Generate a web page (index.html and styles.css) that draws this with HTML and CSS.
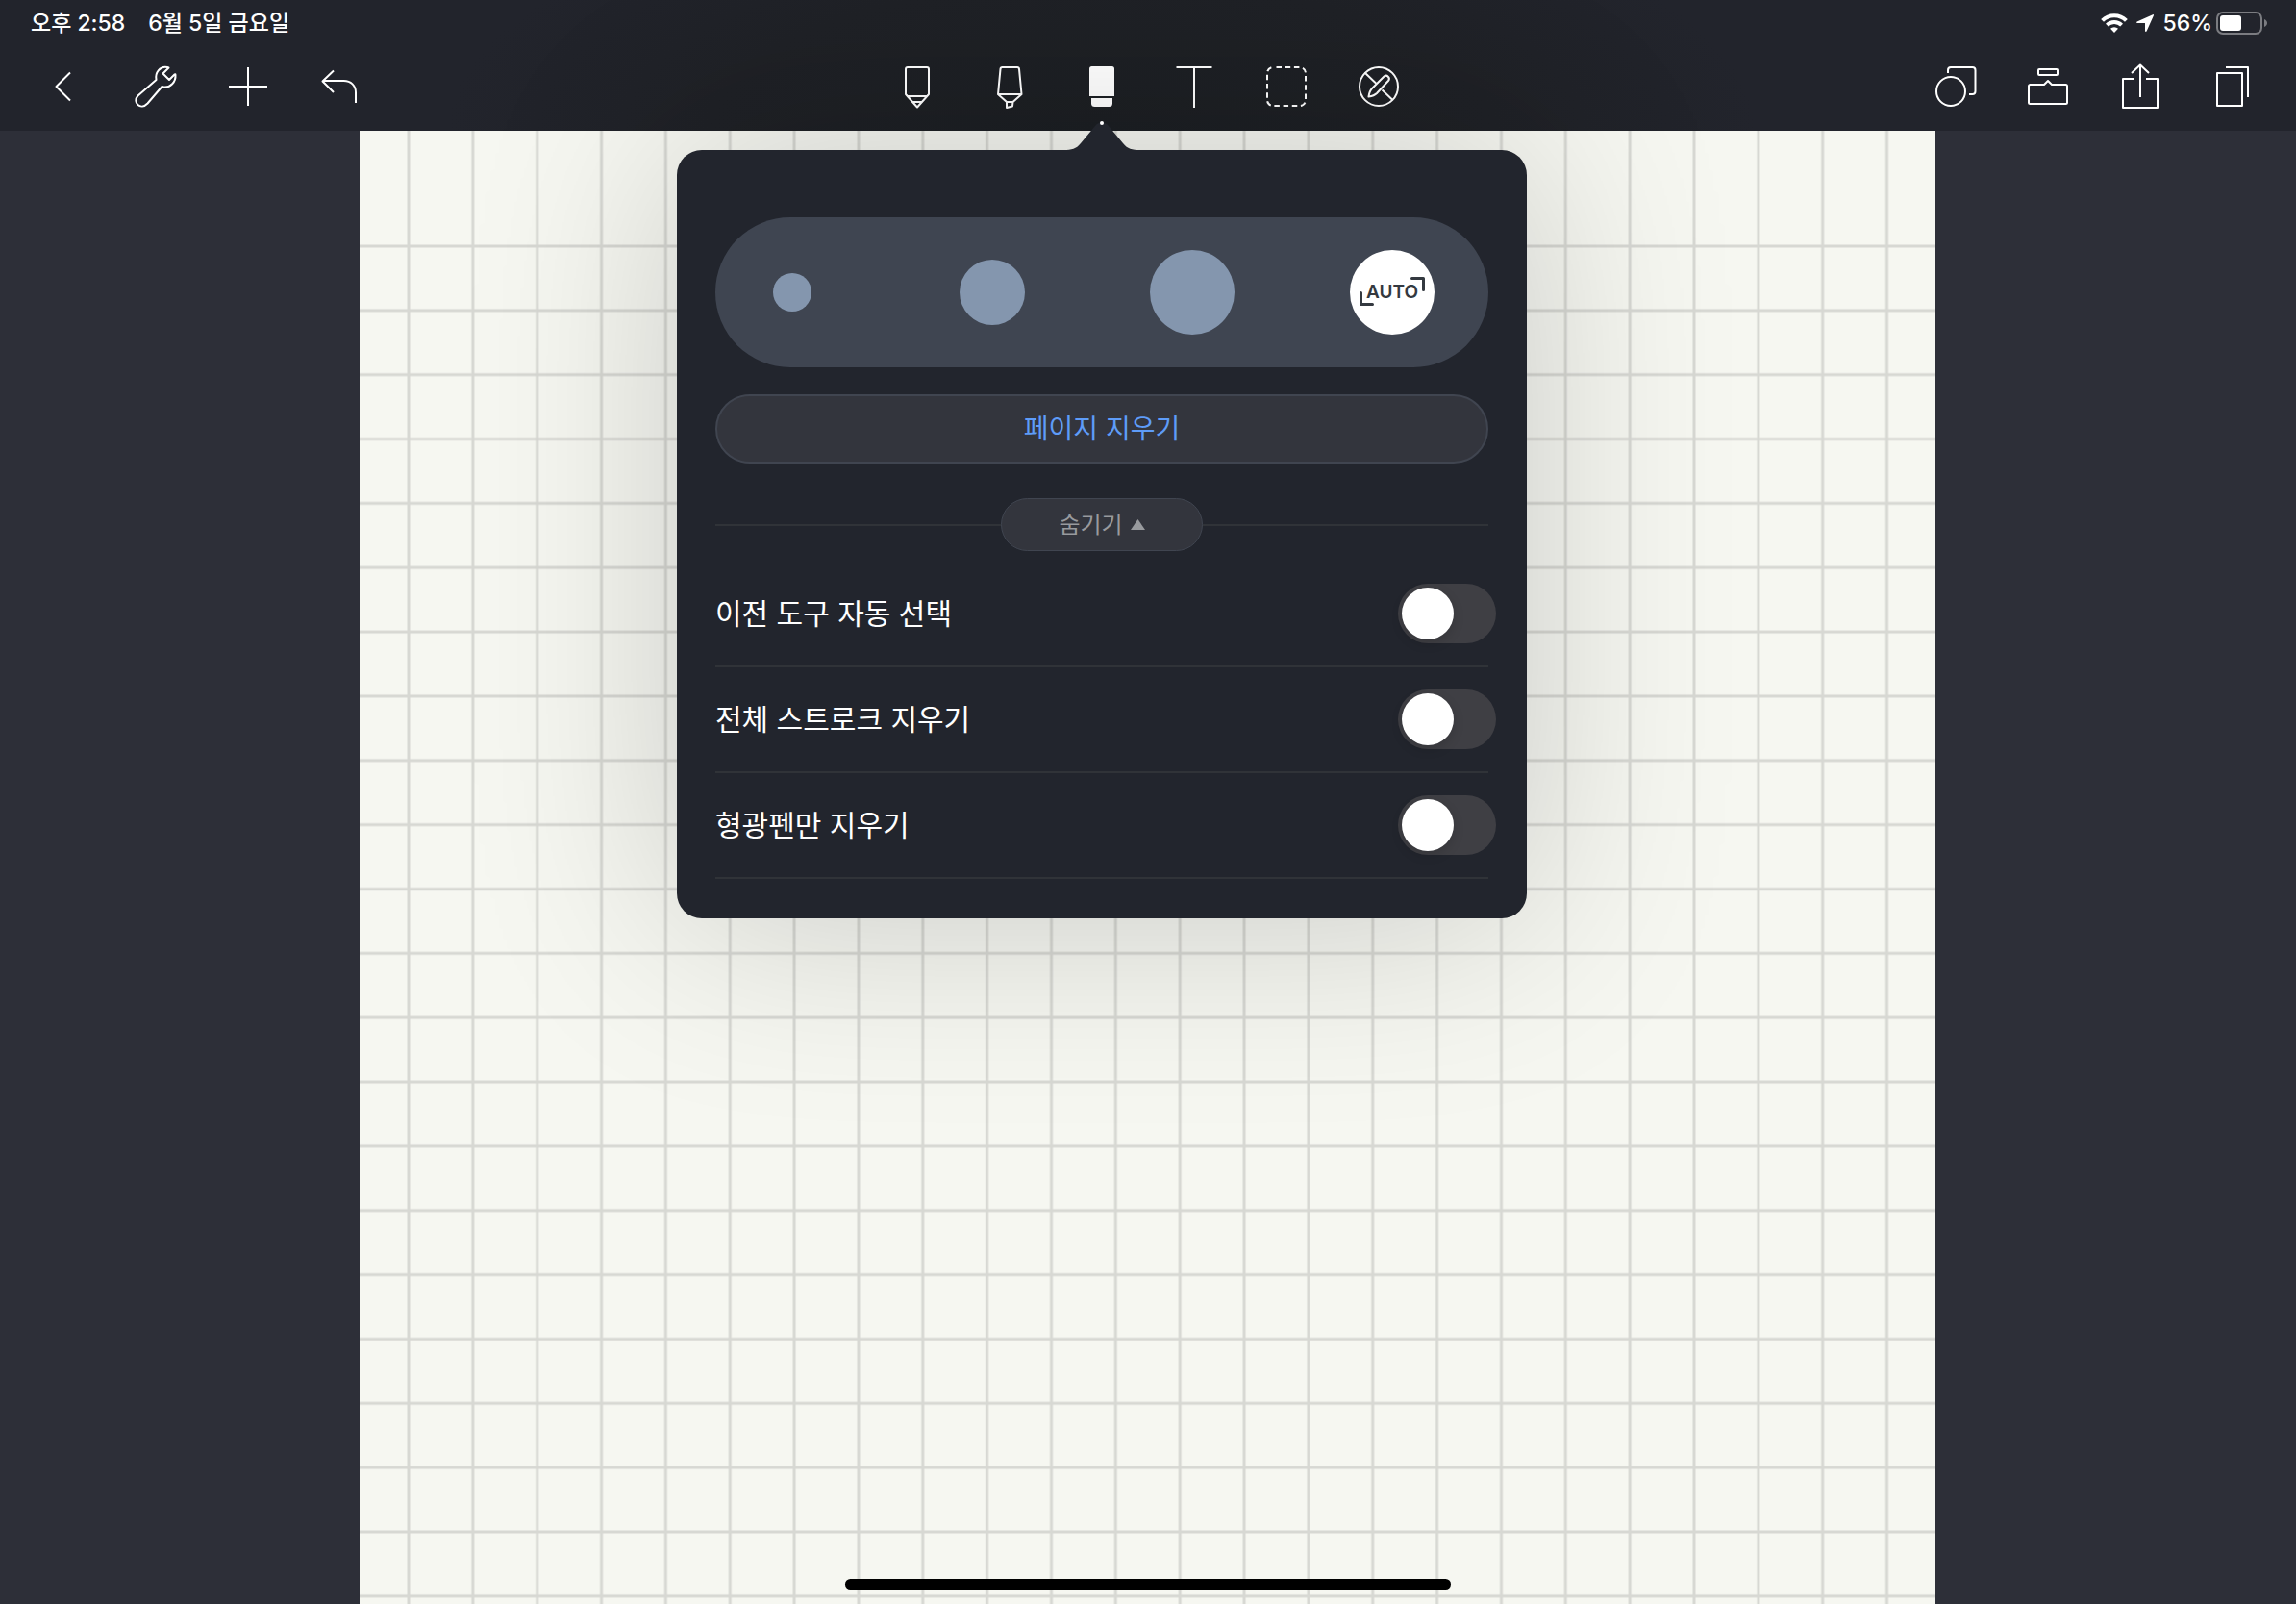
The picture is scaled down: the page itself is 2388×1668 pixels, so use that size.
FILE: index.html
```html
<!DOCTYPE html>
<html lang="ko">
<head>
    <meta charset="UTF-8">
    <meta name="viewport" content="width=device-width, initial-scale=1.0">
    <title>노트</title>
    <link rel="stylesheet" href="styles.css">
</head>
<body>
    <header class="header">
        <div class="status-bar">
            <div class="status-group status-time">
                <span>오후 2:58</span>
                <span>6월 5일 금요일</span>
            </div>
            <div class="status-group">
                <svg width="28" height="20" viewBox="0 0 28 20" fill="none" stroke="#fff" stroke-width="4">
                    <path d="M1.6 7.4a17.5 17.5 0 0 1 24.8 0"/>
                    <path d="M6.4 12.1a10.8 10.8 0 0 1 15.2 0"/>
                    <path d="M14 20l-4-4.2a5.8 5.8 0 0 1 8 0z" fill="#fff" stroke="none"/>
                </svg>
                <svg class="location" width="18" height="18" viewBox="0 0 18 18" fill="#fff">
                    <path d="M17 .2L.7 7.4c-1 .5-.8 1.6.3 1.6h7.6c.3 0 .4.1.4.4V17c0 1.1 1.2 1.3 1.7.3L17.9 1.2c.3-.8-.2-1.3-.9-1z"/>
                </svg>
                <span class="percent">56%</span>
                <svg width="53" height="24" viewBox="0 0 53 24" fill="none">
                    <rect x="1" y="1" width="46" height="22" rx="6" stroke="#7b7c81" stroke-width="2"/>
                    <rect x="4" y="4" width="22" height="16" rx="3" fill="#fff"/>
                    <path d="M50 8c4 1.5 4 6.5 0 8z" fill="#7b7c81"/>
                </svg>
            </div>
        </div>

        <nav class="toolbar">
            <div class="tools">
                <button class="tool" aria-label="뒤로">
                    <svg class="icon" viewBox="0 0 48 48"><path d="M31 9.5L16.5 24 31 38.5"/></svg>
                </button>
                <button class="tool" aria-label="설정">
                    <svg class="icon" viewBox="0 0 48 48"><path d="M37.5 4.5L31.500 10.5l6.500 6.500 5.500-5.500c.5-.5 1-.3 1 .5.5 7.500-5.500 13-11.500 12.500-1 0-1.700-.5-2.500-.5L15.500 41.500C8.500 49-1 40.500 5.500 33.500L24.500 17C23 9.500 28.500 2.500 36 4z"/></svg>
                </button>
                <button class="tool" aria-label="추가">
                    <svg class="icon" viewBox="0 0 48 48"><path d="M24 4v40M4 24h40"/></svg>
                </button>
                <button class="tool" aria-label="실행 취소">
                    <svg class="icon" viewBox="0 0 48 48"><path d="M17 7.5L5.5 18.500 17 30M5.500 18h22C35 18 40 23 40 30v11"/></svg>
                </button>
            </div>

            <div class="tools">
                <button class="tool" aria-label="펜">
                    <svg class="icon" viewBox="0 0 48 48"><path d="M14 4h20a2 2 0 0 1 2 2v26L24 45.5 12 32V6a2 2 0 0 1 2-2zM13.5 34h21M19 40h10"/></svg>
                </button>
                <button class="tool" aria-label="형광펜">
                    <svg class="icon" viewBox="0 0 48 48"><path d="M16.5 4h15.5a2 2 0 0 1 2 1.8L36.5 32 27.5 40h-6.5L12 32 14.5 5.8A2 2 0 0 1 16.5 4zM12 32h24.5M21 40v6l6-1.5.5-4.5"/></svg>
                </button>
                <div class="tool-anchor">
                    <button class="tool" aria-label="지우개" aria-expanded="true">
                        <svg class="icon icon-filled" viewBox="0 0 48 48">
                            <path d="M13.5 3h21a2.500 2.500 0 0 1 2.500 2.500V34H11V5.500A2.500 2.500 0 0 1 13.500 3z"/>
                            <path d="M13 36h22v5.500a3.500 3.500 0 0 1-3.500 3.500h-15a3.500 3.500 0 0 1-3.500-3.500z"/>
                        </svg>
                    </button>

                    <section class="popover" aria-label="지우개 설정">
                        <svg class="popover-arrow" width="80" height="30" viewBox="0 0 80 30">
                            <path d="M0 30c9 0 13-1 18-7L33 5c4-5 10-5 14 0l15 18c5 6 9 7 18 7z" fill="#22252d"/>
                            <circle cx="40" cy="2" r="2" fill="#fff"/>
                        </svg>

                        <div class="sizes" role="radiogroup" aria-label="지우개 크기">
                            <label class="size"><input type="radio" name="size" class="dot dot-small" aria-label="작게"></label>
                            <label class="size"><input type="radio" name="size" class="dot dot-medium" aria-label="중간"></label>
                            <label class="size"><input type="radio" name="size" class="dot dot-large" aria-label="크게"></label>
                            <label class="size">
                                <input type="radio" name="size" class="dot dot-large" checked>
                                <svg class="brackets" viewBox="0 0 88 88"><path d="M11.5 44.5v12h12M64.5 29.5h12v12"/></svg>
                                <span class="auto-text">AUTO</span>
                            </label>
                        </div>

                        <button class="clear-btn">페이지 지우기</button>

                        <div class="divider">
                            <button class="hide-btn">
                                <span class="label">숨기기</span>
                                <svg width="15" height="11" viewBox="0 0 15 11"><path d="M7.5 0L15 11H0z" fill="currentColor"/></svg>
                            </button>
                        </div>

                        <div class="options">
                            <label class="option">
                                <span class="label">이전 도구 자동 선택</span>
                                <input type="checkbox" class="switch" role="switch">
                            </label>
                            <label class="option">
                                <span class="label">전체 스트로크 지우기</span>
                                <input type="checkbox" class="switch" role="switch">
                            </label>
                            <label class="option">
                                <span class="label">형광펜만 지우기</span>
                                <input type="checkbox" class="switch" role="switch">
                            </label>
                        </div>
                    </section>
                </div>
                <button class="tool" aria-label="텍스트">
                    <svg class="icon" viewBox="0 0 48 48"><path d="M5.5 4h37M24 4v42"/></svg>
                </button>
                <button class="tool" aria-label="선택">
                    <svg class="icon" viewBox="0 0 48 48"><rect x="4" y="4" width="40" height="40" rx="6" stroke-dasharray="5.5 3.7" stroke-dashoffset="-3.5"/></svg>
                </button>
                <button class="tool" aria-label="읽기 전용">
                    <svg class="icon" viewBox="0 0 48 48"><circle cx="24" cy="24" r="20"/><path d="M9.5 9.5l11.5 11M27.500 27.500L38.500 38M13.500 34.500c.5-3.500 1.500-6.500 3.500-8.500l12.500-12.500c3-2.500 7 1.500 4.500 4.500L22 31c-2.500 2.500-5 3-8.500 3.500z"/></svg>
                </button>
            </div>

            <div class="tools tools-right">
                <button class="tool" aria-label="도형">
                    <svg class="icon" viewBox="0 0 48 48"><circle cx="19" cy="29" r="15"/><path d="M16 10V7a3 3 0 0 1 3-3h22.500a3 3 0 0 1 3 3v22a3 3 0 0 1-3 3H38"/></svg>
                </button>
                <button class="tool" aria-label="도구 상자">
                    <svg class="icon" viewBox="0 0 48 48"><rect x="14" y="6" width="20" height="6" rx="1"/><path d="M5.500 22H20l1-1 3-3 3 3 1 1h14.500A1.500 1.500 0 0 1 44 23.500v17a1.500 1.500 0 0 1-1.500 1.500h-37A1.500 1.500 0 0 1 4 40.500v-17A1.500 1.500 0 0 1 5.500 22z"/></svg>
                </button>
                <button class="tool" aria-label="공유">
                    <svg class="icon" viewBox="0 0 48 48"><path d="M18 16H6v30h36V16H30M24 35V1.500M15 10l9-8.500 9 8.500"/></svg>
                </button>
                <button class="tool" aria-label="페이지">
                    <svg class="icon" viewBox="0 0 48 48"><path d="M8 10h26v34H8zM17 4h23v31"/></svg>
                </button>
            </div>
        </nav>
    </header>

    <main class="workspace">
        <svg class="paper" aria-hidden="true">
            <defs>
                <pattern id="columns" x="49" width="66.85" height="66.85" patternUnits="userSpaceOnUse">
                    <path d="M2 0v67"/>
                </pattern>
                <pattern id="rows" y="118" width="66.85" height="66.85" patternUnits="userSpaceOnUse">
                    <path d="M0 2h67"/>
                </pattern>
            </defs>
            <rect width="100%" height="100%" fill="url(#columns)"/>
            <!-- ruling starts below the top margin -->
            <rect y="118" width="100%" height="100%" fill="url(#rows)"/>
        </svg>
    </main>

    <div class="home-indicator"></div>
</body>
</html>
```
FILE: styles.css
```css
* {
    box-sizing: border-box;
    margin: 0;
    padding: 0;
}

body {
    position: relative;
    display: flex;
    flex-direction: column;
    min-height: 100vh;
    overflow: hidden;
    background-color: #2d2f38;
    color: #fff;
    font-family: Inter, "Noto Sans CJK KR", sans-serif;
}

button {
    border: none;
    background: none;
    color: inherit;
    font-family: inherit;
    cursor: pointer;
}

/* header */
.header {
    position: relative;
    z-index: 1;
    background: radial-gradient(ellipse 680px 260px at 48% 100%, #1c1f23, #1f2126 60%, #22242c) #22242c;
}

.status-bar {
    display: flex;
    justify-content: space-between;
    height: 48px;
    padding: 0 30px 0 32px;
    font-size: 23px;
    font-weight: 500;
    line-height: 28px;
}

.status-group {
    display: flex;
    align-items: center;
}

.status-time {
    gap: 24px;
}

.location {
    margin: 0 9px;
}

.percent {
    margin-right: 4px;
}

.toolbar {
    display: grid;
    grid-template-columns: 1fr auto 1fr;
    height: 88px;
    padding: 0 18px;
}

.tools {
    display: flex;
}

.tools-right {
    justify-content: flex-end;
}

.tool {
    display: flex;
    justify-content: center;
    width: 96px;
    padding: 18px 0 22px;
}

.tool-anchor {
    position: relative;
}

.icon {
    width: 48px;
    height: 48px;
    fill: none;
    stroke: #fff;
    stroke-width: 2;
    stroke-linejoin: round;
}

.icon-filled {
    fill: #fff;
    stroke: none;
}

/* eraser popover */
.popover {
    position: absolute;
    top: 108px;
    left: 50%;
    width: 884px;
    padding: 70px 40px 41px;
    border-radius: 26px;
    background-color: #22252d;
    box-shadow: 0 0 220px rgba(0, 0, 0, 0.19);
    transform: translateX(-50%);
    font-family: "Noto Sans CJK KR", sans-serif;
}

.popover-arrow {
    position: absolute;
    bottom: 100%;
    left: 50%;
    transform: translateX(-50%);
}

.sizes {
    display: flex;
    justify-content: space-between;
    align-items: center;
    height: 156px;
    padding: 0 56px 0 36px;
    border-radius: 78px;
    background-color: #3f4551;
}

.size {
    display: grid;
    place-items: center;
    width: 88px;
    height: 88px;
    cursor: pointer;
}

.size > * {
    grid-area: 1 / 1;
}

.dot {
    appearance: none;
    border-radius: 50%;
    background-color: #8496ae;
    cursor: pointer;
}

.dot:checked {
    background-color: #fff;
}

.dot-small {
    width: 40px;
    height: 40px;
}

.dot-medium {
    width: 68px;
    height: 68px;
}

.dot-large {
    width: 88px;
    height: 88px;
}

.brackets {
    width: 88px;
    height: 88px;
    fill: none;
    stroke: #343940;
    stroke-width: 3;
    stroke-linecap: round;
    stroke-linejoin: round;
}

.auto-text {
    color: #343940;
    font-family: Inter, sans-serif;
    font-size: 19px;
    font-weight: 600;
    line-height: 24px;
}

.clear-btn {
    width: 100%;
    height: 72px;
    margin-top: 28px;
    padding-bottom: 4px;
    border: 2px solid #404550;
    border-radius: 36px;
    background-color: #33353d;
    color: #5e9cf8;
    font-size: 28px;
    line-height: 40px;
}

.divider {
    display: flex;
    align-items: center;
    margin: 36px 0 11px;
}

.divider::before,
.divider::after {
    content: "";
    flex: 1;
    height: 2px;
    background-color: #303338;
}

.hide-btn {
    display: flex;
    justify-content: center;
    align-items: center;
    gap: 8px;
    width: 210px;
    height: 55px;
    border: 1px solid #404550;
    border-radius: 28px;
    background-color: #33353d;
    color: #989a9e;
    font-size: 24px;
    line-height: 32px;
}

.label {
    padding-bottom: 4px;
}

.option {
    display: flex;
    justify-content: space-between;
    align-items: center;
    height: 110px;
    border-bottom: 2px solid #303338;
    font-size: 30px;
    line-height: 40px;
    cursor: pointer;
}

.switch {
    appearance: none;
    width: 102px;
    height: 62px;
    margin-right: -8px;
    padding: 4px;
    border-radius: 31px;
    background-color: #3f3f44;
    cursor: pointer;
}

.switch::before {
    content: "";
    display: block;
    width: 54px;
    height: 54px;
    border-radius: 50%;
    background-color: #fff;
    box-shadow: 0 4px 12px rgba(0, 0, 0, 0.15);
    transition: transform 0.2s;
}

.switch:checked {
    background-color: #5e9cf8;
}

.switch:checked::before {
    transform: translateX(40px);
}

/* note page */
.workspace {
    display: flex;
    flex: 1;
    padding: 0 375px 0 374px;
}

.paper {
    flex: 1;
    min-width: 0;
    background-color: #f6f7f1;
}

.paper path {
    stroke: #d7d8d3;
    stroke-width: 3;
}

.home-indicator {
    position: absolute;
    bottom: 15px;
    left: 50%;
    width: 630px;
    height: 11px;
    border-radius: 6px;
    background-color: #000;
    transform: translateX(-50%);
}
```
